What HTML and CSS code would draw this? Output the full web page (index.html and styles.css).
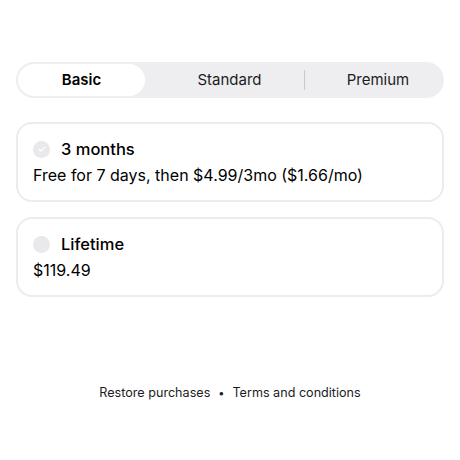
FILE: index.html
```html
<!DOCTYPE html>
<html>
<head>
<meta charset="utf-8">
<link rel="stylesheet" href="styles.css">
</head>
<body>
<div class="page">
  <div class="segmented">
    <div class="seg seg-basic active">Basic</div>
    <div class="seg seg-standard">Standard</div>
    <div class="divider"></div>
    <div class="seg seg-premium">Premium</div>
  </div>

  <div class="plans">
    <div class="card">
      <div class="card-head">
        <span class="radio checked">
          <svg viewBox="0 0 16 16" width="10" height="10"><path d="M3.5 8.3l3 3 6-6.4" fill="none" stroke="#fff" stroke-width="2" stroke-linecap="round" stroke-linejoin="round"/></svg>
        </span>
        <span class="title">3 months</span>
      </div>
      <div class="desc">Free for 7 days, then $4.99/3mo ($1.66/mo)</div>
    </div>
    <div class="card">
      <div class="card-head">
        <span class="radio"></span>
        <span class="title">Lifetime</span>
      </div>
      <div class="desc">$119.49</div>
    </div>
  </div>

  <div class="footer">
    <span>Restore purchases</span>
    <span class="dot">•</span>
    <span>Terms and conditions</span>
  </div>
</div>
</body>
</html>
```
FILE: styles.css
```css
* { box-sizing: border-box; }
html, body { margin: 0; padding: 0; background: #fff; }
body {
  font-family: Inter, "Noto Sans", sans-serif;
  color: #000;
}
.page {
  width: 460px;
  height: 460px;
  padding: 62px 16px 0;
}
.segmented {
  display: flex;
  align-items: center;
  height: 36px;
  padding: 2px;
  background: #eeeef0;
  border-radius: 18px;
}
.seg {
  height: 32px;
  display: flex;
  align-items: center;
  justify-content: center;
  font-size: 15px;
  color: #1c1c1e;
  padding-bottom: 1px;
}
.seg-basic { width: 127px; }
.seg-standard { width: 159px; padding-left: 10px; }
.seg-premium { flex: 1; padding-left: 9px; }
.active {
  background: #fff;
  border-radius: 16px;
  font-weight: 600;
  color: #000;
}
.divider {
  width: 1px;
  height: 20px;
  background: #c9c9cd;
}
.plans {
  margin-top: 24px;
  display: flex;
  flex-direction: column;
  gap: 15px;
}
.card {
  height: 80px;
  border: 2px solid #ececee;
  border-radius: 16px;
  padding: 13px 15px 0;
}
.card-head {
  display: flex;
  align-items: center;
  height: 24px;
}
.radio {
  width: 17px;
  height: 17px;
  border-radius: 50%;
  background: #e9e9eb;
  display: flex;
  align-items: center;
  justify-content: center;
  margin-right: 11px;
}
.title {
  font-size: 16.5px;
  font-weight: 500;
}
.desc {
  margin-top: 2px;
  font-size: 16px;
  line-height: 24px;
}
.footer {
  margin-top: 88px;
  display: flex;
  justify-content: center;
  gap: 8px;
  font-size: 12.6px;
  color: #1c1c1e;
}
.dot { font-size: 11px; line-height: 16px; }
```
